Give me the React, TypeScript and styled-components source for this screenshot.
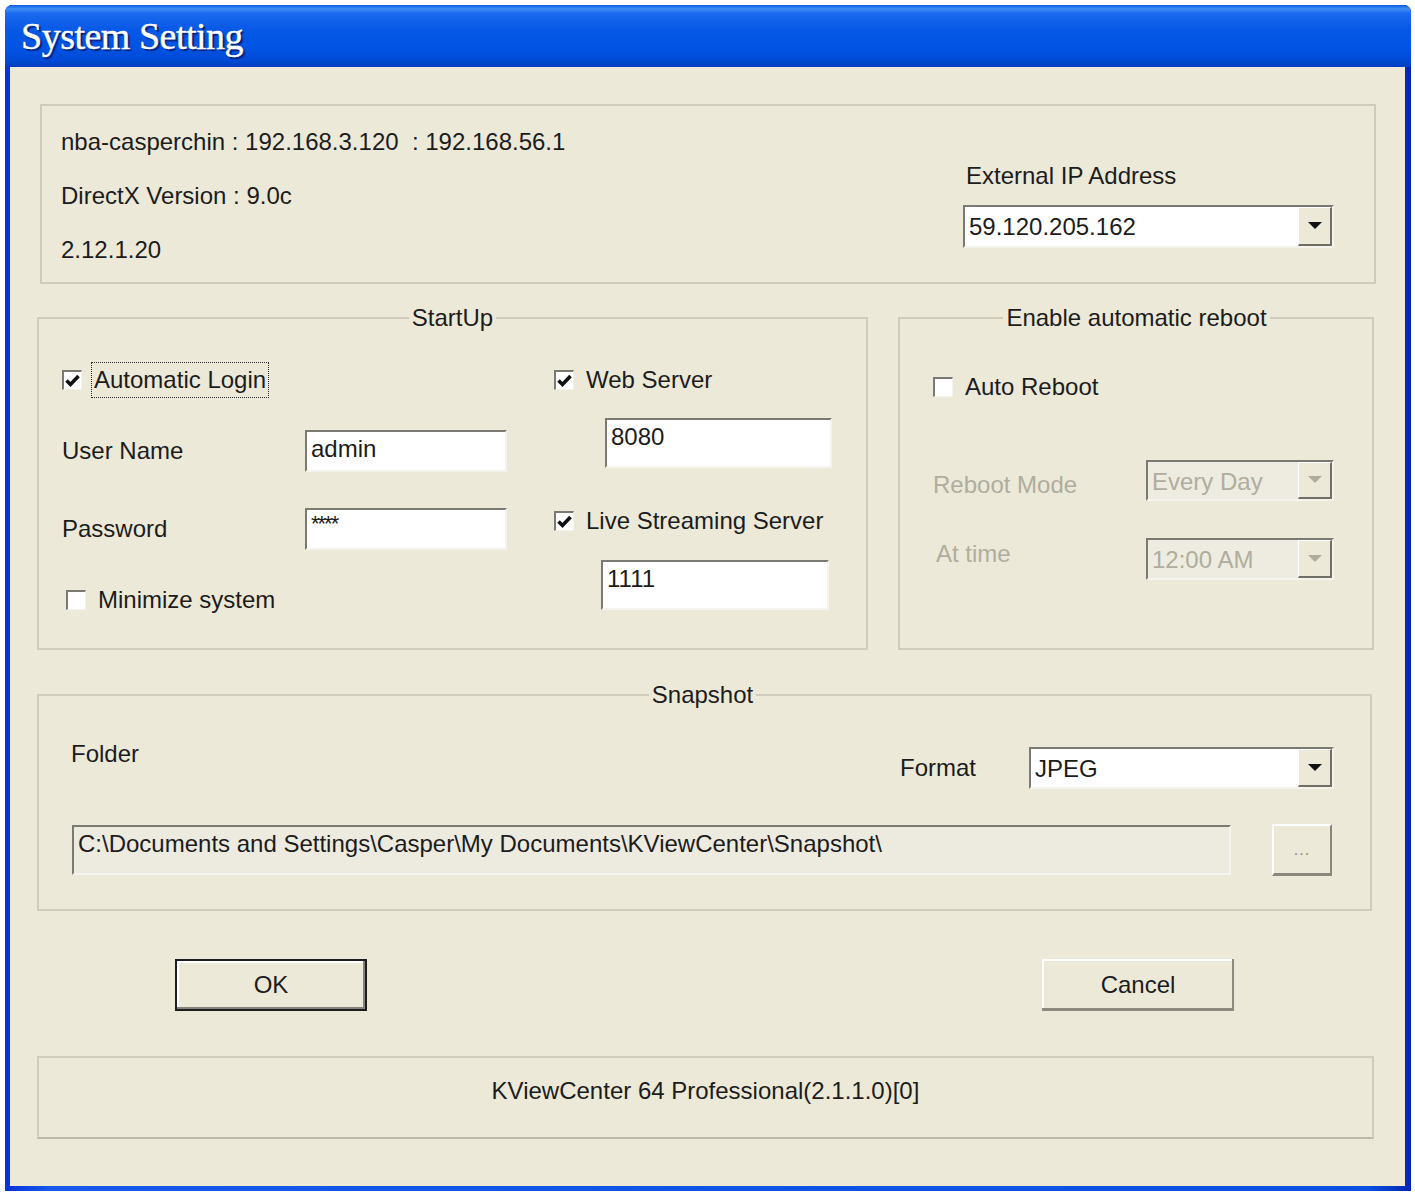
import React from "react";
import styled, { createGlobalStyle } from "styled-components";

const GlobalStyle = createGlobalStyle`
  html, body {
    margin: 0;
    padding: 0;
    background: #ffffff;
  }
  body {
    font-family: "Liberation Sans", Arial, sans-serif;
    color: #1c1c1c;
  }
`;

const FACE = "#ece9d8";
const DISABLED = "#b0ad9e";

const Screen = styled.div`
  width: 1415px;
  padding: 5px 4px 4px 5px;
  box-sizing: border-box;
`;

const Window = styled.div`
  width: 1406px;
  display: flex;
  flex-direction: column;
  border-radius: 7px 7px 0 0;
  overflow: hidden;
  background: linear-gradient(to right, #0831d9 0%, #1558ea 3%, #0a4fe0 97%, #0026b0 100%);
`;

const TitleBar = styled.div`
  height: 62px;
  display: flex;
  align-items: center;
  padding: 0 0 0 16px;
  background: linear-gradient(
    to bottom,
    #0a5ce8 0%,
    #3f8cf3 6%,
    #1a69ee 14%,
    #0758e6 40%,
    #0054e3 70%,
    #004ad6 88%,
    #003ec0 100%
  );
`;

const Title = styled.span`
  font-family: "Liberation Serif", "DejaVu Serif", serif;
  font-size: 38px;
  color: #ffffff;
  letter-spacing: -0.5px;
  text-shadow: 2px 2px 1px #0a1f74;
  -webkit-text-stroke: 0.4px #ffffff;
`;

const Body = styled.div`
  background: ${FACE};
  margin: 0 6px 5px 5px;
  padding: 37px 31px 47px 27px;
  display: flex;
  flex-direction: column;
`;

const Text = styled.span<{ $disabled?: boolean }>`
  font-size: 24px;
  line-height: 28px;
  white-space: nowrap;
  color: ${(p) => (p.$disabled ? DISABLED : "#1c1c1c")};
`;

/* top info panel */
const InfoPanel = styled.div`
  height: 180px;
  box-sizing: border-box;
  border: 2px solid #cfccbd;
  margin-left: 3px;
  margin-right: -2px;
  padding: 22px 40px 0 19px;
  display: flex;
  justify-content: space-between;
`;

const InfoLines = styled.div`
  display: flex;
  flex-direction: column;
  gap: 26px;
`;

const IpColumn = styled.div`
  display: flex;
  flex-direction: column;
  padding-top: 34px;
  gap: 15px;
`;

/* group boxes */
const GroupRow = styled.div`
  display: flex;
  gap: 30px;
  margin-top: 21px;
`;

const Group = styled.fieldset<{ $width: number; $pad: string }>`
  margin: 0;
  min-width: 0;
  width: ${(p) => p.$width}px;
  box-sizing: border-box;
  border: 2px solid #cfccbd;
  padding: ${(p) => p.$pad};
`;

const GroupTitle = styled.legend`
  margin: 0 auto;
  padding: 0 3px;
  font-size: 24px;
  line-height: 26px;
  color: #1c1c1c;
`;

const Columns = styled.div`
  display: flex;
  gap: 47px;
`;

const Column = styled.div<{ $width: number }>`
  width: ${(p) => p.$width}px;
  display: flex;
  flex-direction: column;
`;

const CheckRow = styled.div<{ $top?: number; $indent?: number }>`
  height: 36px;
  display: flex;
  align-items: center;
  gap: 12px;
  margin-top: ${(p) => p.$top ?? 0}px;
  margin-left: ${(p) => p.$indent ?? 0}px;
`;

const Box = styled.span`
  width: 20px;
  height: 20px;
  box-sizing: border-box;
  background: #ffffff;
  border-top: 2px solid #7b7a72;
  border-left: 2px solid #7b7a72;
  border-right: 1px solid #f3f2ec;
  border-bottom: 1px solid #f3f2ec;
  display: flex;
  align-items: center;
  justify-content: center;
  flex-shrink: 0;
`;

const FocusLabel = styled.span`
  outline: 1px dotted #2a2a2a;
  outline-offset: 0;
  padding: 3px 2px 3px 2px;
  margin-left: -2px;
`;

const FieldRow = styled.div<{ $top: number; $label: number; $height: number }>`
  display: grid;
  grid-template-columns: ${(p) => p.$label}px auto;
  align-items: center;
  height: ${(p) => p.$height}px;
  margin-top: ${(p) => p.$top}px;
`;

const TextBox = styled.div<{ $width: number; $height: number; $top?: number; $indent?: number; $readOnly?: boolean }>`
  width: ${(p) => p.$width}px;
  height: ${(p) => p.$height}px;
  box-sizing: border-box;
  margin-top: ${(p) => p.$top ?? 0}px;
  margin-left: ${(p) => p.$indent ?? 0}px;
  background: ${(p) => (p.$readOnly ? "#edeae0" : "#ffffff")};
  border-top: 2px solid #7b7a72;
  border-left: 2px solid #7b7a72;
  border-right: 2px solid #f4f3ee;
  border-bottom: 2px solid #f4f3ee;
  padding: 3px 4px;
  font-size: 24px;
  line-height: 28px;
  white-space: nowrap;
  overflow: hidden;
`;

const Masked = styled.span`
  display: inline-block;
  font-size: 22px;
  line-height: 18px;
  letter-spacing: -2px;
  vertical-align: top;
  margin-top: 2px;
`;

const Combo = styled.div<{ $width: number; $height: number; $disabled?: boolean }>`
  width: ${(p) => p.$width}px;
  height: ${(p) => p.$height}px;
  box-sizing: border-box;
  display: flex;
  align-items: stretch;
  background: ${(p) => (p.$disabled ? "#eeebe0" : "#ffffff")};
  border-top: 2px solid #7b7a72;
  border-left: 2px solid #7b7a72;
  border-right: 2px solid #f4f3ee;
  border-bottom: 2px solid #f4f3ee;
  color: ${(p) => (p.$disabled ? DISABLED : "#1c1c1c")};
`;

const ComboValue = styled.span`
  flex: 1;
  padding: 2px 4px 0;
  font-size: 24px;
  line-height: 36px;
  white-space: nowrap;
`;

const ComboArrow = styled.span`
  width: 34px;
  box-sizing: border-box;
  background: ${FACE};
  border-top: 1px solid #ffffff;
  border-left: 1px solid #ffffff;
  border-right: 2px solid #716f64;
  border-bottom: 2px solid #716f64;
  display: flex;
  align-items: center;
  justify-content: center;
`;

const Arrow = ({ disabled }: { disabled?: boolean }) => (
  <svg width="14" height="8" viewBox="0 0 14 8">
    <polygon points="0,0 14,0 7,7" fill={disabled ? DISABLED : "#111"} />
  </svg>
);

const Check = () => (
  <svg width="15" height="14" viewBox="0 0 15 14">
    <path d="M1.5 6.5 L5.5 10.5 L13.5 2" fill="none" stroke="#111" strokeWidth="3.6" />
  </svg>
);

const CheckBox = ({ checked }: { checked?: boolean }) => (
  <Box>{checked && <Check />}</Box>
);

const SelectBox = ({
  value,
  width,
  height,
  disabled,
}: {
  value: string;
  width: number;
  height: number;
  disabled?: boolean;
}) => (
  <Combo $width={width} $height={height} $disabled={disabled}>
    <ComboValue>{value}</ComboValue>
    <ComboArrow>
      <Arrow disabled={disabled} />
    </ComboArrow>
  </Combo>
);

/* reboot group rows */
const RebootRow = styled.div<{ $top: number; $height: number }>`
  display: grid;
  grid-template-columns: 213px 188px;
  align-items: center;
  height: ${(p) => p.$height}px;
  margin-top: ${(p) => p.$top}px;
`;

/* snapshot group */
const SnapRow = styled.div<{ $top?: number }>`
  display: flex;
  align-items: center;
  margin-top: ${(p) => p.$top ?? 0}px;
`;

const FolderHead = styled.div`
  height: 49px;
  display: flex;
  align-items: flex-start;
  justify-content: space-between;
`;

const FormatPick = styled.div`
  align-self: flex-end;
  display: flex;
  align-items: center;
  gap: 53px;
`;

const BrowseButton = styled.div`
  width: 60px;
  height: 52px;
  box-sizing: border-box;
  margin-left: 41px;
  background: ${FACE};
  border-top: 2px solid #ffffff;
  border-left: 2px solid #ffffff;
  border-right: 2px solid #8a887c;
  border-bottom: 3px solid #8a887c;
  display: flex;
  align-items: center;
  justify-content: center;
  font-size: 16px;
  color: #8a887c;
  letter-spacing: 1px;
`;

/* bottom buttons */
const ButtonBar = styled.div`
  display: flex;
  justify-content: space-between;
  margin-top: 48px;
  padding: 0 140px 0 138px;
`;

const PushButton = styled.div<{ $default?: boolean }>`
  width: 192px;
  height: 52px;
  box-sizing: border-box;
  background: ${FACE};
  display: flex;
  align-items: center;
  justify-content: center;
  font-size: 24px;
  color: #1c1c1c;
  border: ${(p) => (p.$default ? "2px solid #1d1d1d" : "none")};
  box-shadow: ${(p) =>
    p.$default
      ? "inset -2px -2px 0 #84827a, inset 2px 2px 0 #ffffff"
      : "inset -2px -3px 0 #8c8a7e, inset 2px 2px 0 #ffffff"};
`;

const StatusPanel = styled.div`
  margin-top: 45px;
  height: 83px;
  box-sizing: border-box;
  border: 2px solid #cfccbd;
  border-bottom-color: #bdbaab;
  padding-bottom: 14px;
  display: flex;
  align-items: center;
  justify-content: center;
`;

export default function App() {
  return (
    <Screen>
      <GlobalStyle />
      <Window>
        <TitleBar>
          <Title>System Setting</Title>
        </TitleBar>
        <Body>
          <InfoPanel>
            <InfoLines>
              <Text>nba-casperchin : 192.168.3.120 &nbsp;: 192.168.56.1</Text>
              <Text>DirectX Version : 9.0c</Text>
              <Text>2.12.1.20</Text>
            </InfoLines>
            <IpColumn>
              <Text style={{ marginLeft: 3 }}>External IP Address</Text>
              <SelectBox value="59.120.205.162" width={371} height={43} />
            </IpColumn>
          </InfoPanel>

          <GroupRow>
            <Group $width={831} $pad="31px 23px 30px 23px">
              <GroupTitle>StartUp</GroupTitle>
              <Columns>
                <Column $width={445}>
                  <CheckRow>
                    <CheckBox checked />
                    <FocusLabel>
                      <Text>Automatic Login</Text>
                    </FocusLabel>
                  </CheckRow>
                  <FieldRow $top={32} $label={243} $height={42}>
                    <Text>User Name</Text>
                    <TextBox $width={202} $height={42}>
                      admin
                    </TextBox>
                  </FieldRow>
                  <FieldRow $top={36} $label={243} $height={42}>
                    <Text>Password</Text>
                    <TextBox $width={202} $height={42}>
                      <Masked>****</Masked>
                    </TextBox>
                  </FieldRow>
                  <CheckRow $top={32} $indent={4}>
                    <CheckBox />
                    <Text>Minimize system</Text>
                  </CheckRow>
                </Column>
                <Column $width={278}>
                  <CheckRow>
                    <CheckBox checked />
                    <Text>Web Server</Text>
                  </CheckRow>
                  <TextBox $width={227} $height={50} $top={20} $indent={51}>
                    8080
                  </TextBox>
                  <CheckRow $top={35}>
                    <CheckBox checked />
                    <Text>Live Streaming Server</Text>
                  </CheckRow>
                  <TextBox $width={228} $height={50} $top={21} $indent={47}>
                    1111
                  </TextBox>
                </Column>
              </Columns>
            </Group>

            <Group $width={476} $pad="38px 32px 30px 33px">
              <GroupTitle>Enable automatic reboot</GroupTitle>
              <CheckRow>
                <CheckBox />
                <Text>Auto Reboot</Text>
              </CheckRow>
              <RebootRow $top={55} $height={41}>
                <Text $disabled style={{ marginTop: 8 }}>Reboot Mode</Text>
                <SelectBox value="Every Day" width={188} height={41} disabled />
              </RebootRow>
              <RebootRow $top={37} $height={42}>
                <Text $disabled style={{ marginLeft: 3, marginTop: -10 }}>
                  At time
                </Text>
                <SelectBox value="12:00 AM" width={188} height={42} disabled />
              </RebootRow>
            </Group>
          </GroupRow>

          <Group $width={1335} $pad="32px 36px 33px 32px" style={{ marginTop: 32 }}>
            <GroupTitle>Snapshot</GroupTitle>
            <FolderHead>
              <Text>Folder</Text>
              <FormatPick>
                <Text>Format</Text>
                <SelectBox value="JPEG" width={305} height={42} />
              </FormatPick>
            </FolderHead>
            <SnapRow $top={35}>
              <TextBox $width={1159} $height={50} $indent={1} $readOnly>
                C:\Documents and Settings\Casper\My Documents\KViewCenter\Snapshot\
              </TextBox>
              <BrowseButton>...</BrowseButton>
            </SnapRow>
          </Group>

          <ButtonBar>
            <PushButton $default>OK</PushButton>
            <PushButton>Cancel</PushButton>
          </ButtonBar>

          <StatusPanel>
            <Text>KViewCenter 64 Professional(2.1.1.0)[0]</Text>
          </StatusPanel>
        </Body>
      </Window>
    </Screen>
  );
}
